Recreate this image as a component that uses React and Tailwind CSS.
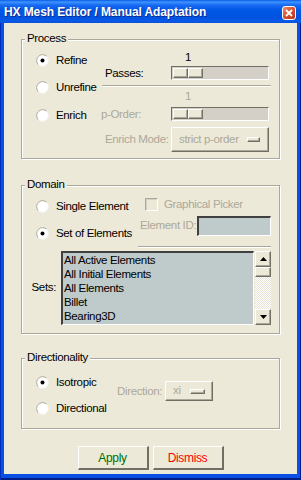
import React from "react";

const raised =
  "border-t border-l border-white border-r border-b border-r-[#716f64] border-b-[#716f64] shadow-[inset_-1px_-1px_0_#aca899]";

const GroupBox = ({ label, className = "", children }) => (
  <div
    className={`relative w-[259px] border border-[#aca899] shadow-[inset_1px_1px_0_#fff,1px_1px_0_#fff] ${className}`}
  >
    <span className="absolute left-[3px] -top-[9px] bg-[#ece9d8] px-[2px] leading-[14px]">
      {label}
    </span>
    {children}
  </div>
);

const Radio = ({ checked, label, className = "" }) => (
  <div className={`flex items-center h-[14px] gap-[7px] ${className}`}>
    <svg width="13" height="13" viewBox="0 0 13 13" className="shrink-0">
      <circle cx="6.5" cy="6.5" r="6" fill="#fff" />
      <path
        d="M2.26 10.74 A6 6 0 0 1 10.74 2.26"
        fill="none"
        stroke="#aca899"
      />
      <path
        d="M10.74 2.26 A6 6 0 0 1 2.26 10.74"
        fill="none"
        stroke="#f4f3ee"
      />
      {checked && <circle cx="6.5" cy="6.5" r="2" fill="#000" />}
    </svg>
    <span className="leading-[14px] whitespace-nowrap">{label}</span>
  </div>
);

const Slider = ({ className = "" }) => (
  <div
    className={`w-[98px] h-[14px] flex p-px bg-[#d4d0c8] border border-t-[#716f64] border-l-[#716f64] border-r-white border-b-white ${className}`}
  >
    <div className={`w-[15px] h-full bg-[#ece9d8] ${raised}`} />
    <div className={`w-[15px] h-full bg-[#ece9d8] ${raised}`} />
  </div>
);

const OptionMenu = ({ text, className = "", indicator = "w-[13px]" }) => (
  <div className={`flex items-center bg-[#ece9d8] ${raised} ${className}`}>
    <span className="flex-1 text-[#aca899] whitespace-nowrap">{text}</span>
    <span className={`h-[5px] bg-[#ece9d8] ${indicator} ${raised}`} />
  </div>
);

const Separator = ({ className = "" }) => (
  <div className={`border-t border-[#aca899] border-b border-b-white ${className}`} />
);

const Arrow = ({ down }) => (
  <svg width="7" height="4" viewBox="0 0 7 4">
    <polygon points={down ? "0,0 7,0 3.5,4" : "0,4 7,4 3.5,0"} fill="#000" />
  </svg>
);

const sets = [
  "All Active Elements",
  "All Initial Elements",
  "All Elements",
  "Billet",
  "Bearing3D",
];

export default function App() {
  return (
    <div className="w-[301px] h-[480px] flex flex-col bg-[#0a4fe3] shadow-[inset_1px_0_0_#0030b8,inset_-1px_0_0_#001e90,inset_0_-2px_0_#001c85] font-['Liberation_Sans',Arial,sans-serif] text-[11.5px] tracking-[-0.35px] text-black select-none">
      {/* title bar */}
      <div className="h-[23px] shrink-0 flex items-start justify-between pl-[4px] pr-[5px] bg-[linear-gradient(to_bottom,#0a5ae8_0px,#3d95ff_2px,#1a6af2_5px,#0058e6_10px,#0052e0_18px,#0a5ae8_21px,#0a4ed8_23px)]">
        <span className="pt-[5px] text-[12px] font-bold tracking-[-0.1px] leading-[14px] text-white [text-shadow:1px_1px_0_#0f2a8c]">
          HX Mesh Editor / Manual Adaptation
        </span>
        <div className="mt-[6px] w-[14px] h-[14px] rounded-[3px] border border-white bg-[linear-gradient(135deg,#f08a6a,#d8502c_50%,#b8361a)] flex items-center justify-center">
          <svg width="8" height="8" viewBox="0 0 8 8">
            <path d="M1 1 L7 7 M7 1 L1 7" stroke="#fff" strokeWidth="1.8" />
          </svg>
        </div>
      </div>

      {/* client area */}
      <div className="flex-1 mx-[4px] mb-[6px] bg-[#ece9d8] pl-[17px] pt-[16px] flex flex-col">
        <GroupBox label="Process" className="h-[120px]">
          <div className="flex">
            <div className="w-[79px] pl-[14px] pt-[13px] flex flex-col">
              <Radio checked label="Refine" />
              <Radio label="Unrefine" className="mt-[13px]" />
              <Radio label="Enrich" className="mt-[14px]" />
            </div>
            <div className="w-[170px] pt-[11px] flex flex-col">
              <div className="flex items-end">
                <span className="w-[70px] pl-[4px] leading-[13px]">Passes:</span>
                <div className="flex flex-col">
                  <div className="ml-[2px] w-[30px] h-[12px] leading-[12px] text-center">1</div>
                  <Slider className="mt-[3px]" />
                </div>
              </div>
              <Separator className="ml-[1px] mt-[5px] w-[169px]" />
              <div className="mt-[3px] flex items-end">
                <span className="w-[70px] leading-[13px] text-[#aca899]">p-Order:</span>
                <div className="flex flex-col">
                  <div className="ml-[2px] w-[30px] h-[12px] leading-[12px] text-center text-[#aca899]">
                    1
                  </div>
                  <Slider className="mt-[5px]" />
                </div>
              </div>
              <div className="mt-[6px] flex items-center">
                <span className="w-[70px] pl-[4px] text-[#aca899] whitespace-nowrap">Enrich Mode:</span>
                <OptionMenu
                  text="strict p-order"
                  className="w-[98px] h-[25px] pl-[7px] pr-[8px]"
                />
              </div>
            </div>
          </div>
        </GroupBox>

        <GroupBox label="Domain" className="h-[149px] mt-[26px]">
          <div className="flex">
            <div className="w-[116px] pl-[14px] pt-[13px] flex flex-col">
              <Radio label="Single Element" />
              <Radio checked label="Set of Elements" className="mt-[13px]" />
            </div>
            <div className="w-[133px] pt-[12px] flex flex-col">
              <div className="ml-[7px] flex items-center gap-[6px] h-[13px]">
                <span className="w-[13px] h-[13px] border border-t-[#aca899] border-l-[#aca899] border-r-white border-b-white shadow-[inset_1px_1px_0_#d4d0c8]" />
                <span className="text-[#aca899]">Graphical Picker</span>
              </div>
              <div className="mt-[5px] ml-[2px] flex items-center justify-between">
                <span className="text-[#aca899]">Element ID:</span>
                <div className="w-[74px] h-[20px] bg-[#bfcacb] border-t-2 border-l-2 border-r border-b border-t-[#404040] border-l-[#404040] border-r-white border-b-white" />
              </div>
              <Separator className="mt-[10px] w-[133px]" />
            </div>
          </div>
          <div className="mt-[3px] flex">
            <span className="w-[39px] pr-[5px] text-right self-center">Sets:</span>
            <div className="w-[193px] h-[74px] bg-[#bfcacb] border-t-2 border-l-2 border-r border-b border-t-[#404040] border-l-[#404040] border-r-white border-b-white flex flex-col">
              {sets.map((s) => (
                <div key={s} className="h-[14px] leading-[14px] pl-px whitespace-nowrap">
                  {s}
                </div>
              ))}
            </div>
            <div className="ml-[1px] w-[16px] h-[74px] flex flex-col">
              <div className={`h-[16px] flex items-center justify-center bg-[#ece9d8] ${raised}`}>
                <Arrow />
              </div>
              <div className={`h-[10px] bg-[#ece9d8] ${raised}`} />
              <div className="flex-1 bg-[image:repeating-conic-gradient(#ffffff_0%_25%,#e6e3d6_0%_50%)] bg-[length:2px_2px]" />
              <div className={`h-[16px] flex items-center justify-center bg-[#ece9d8] ${raised}`}>
                <Arrow down />
              </div>
            </div>
          </div>
        </GroupBox>

        <GroupBox label="Directionality" className="h-[71px] mt-[24px]">
          <div className="flex">
            <div className="w-[95px] pl-[14px] pt-[16px] flex flex-col">
              <Radio checked label="Isotropic" />
              <Radio label="Directional" className="mt-[12px]" />
            </div>
            <div className="pt-[22px] flex items-start">
              <span className="w-[48px] h-[20px] leading-[20px] text-[#aca899]">Direction:</span>
              <OptionMenu
                text="xi"
                className="w-[48px] h-[20px] pl-[7px] pr-[7px]"
                indicator="w-[15px]"
              />
            </div>
          </div>
        </GroupBox>

        <div className="mt-[17px] w-[259px] flex justify-center gap-[4px]">
          <button className="w-[71px] h-[24px] bg-[#ece9d8] border-t border-l border-white border-r-2 border-b-2 border-r-[#716f64] border-b-[#716f64] text-[#007000] text-[12px]">
            Apply
          </button>
          <button className="w-[71px] h-[24px] bg-[#ece9d8] border-t border-l border-white border-r-2 border-b-2 border-r-[#716f64] border-b-[#716f64] text-[#ff0000] text-[12px]">
            Dismiss
          </button>
        </div>
      </div>
    </div>
  );
}
